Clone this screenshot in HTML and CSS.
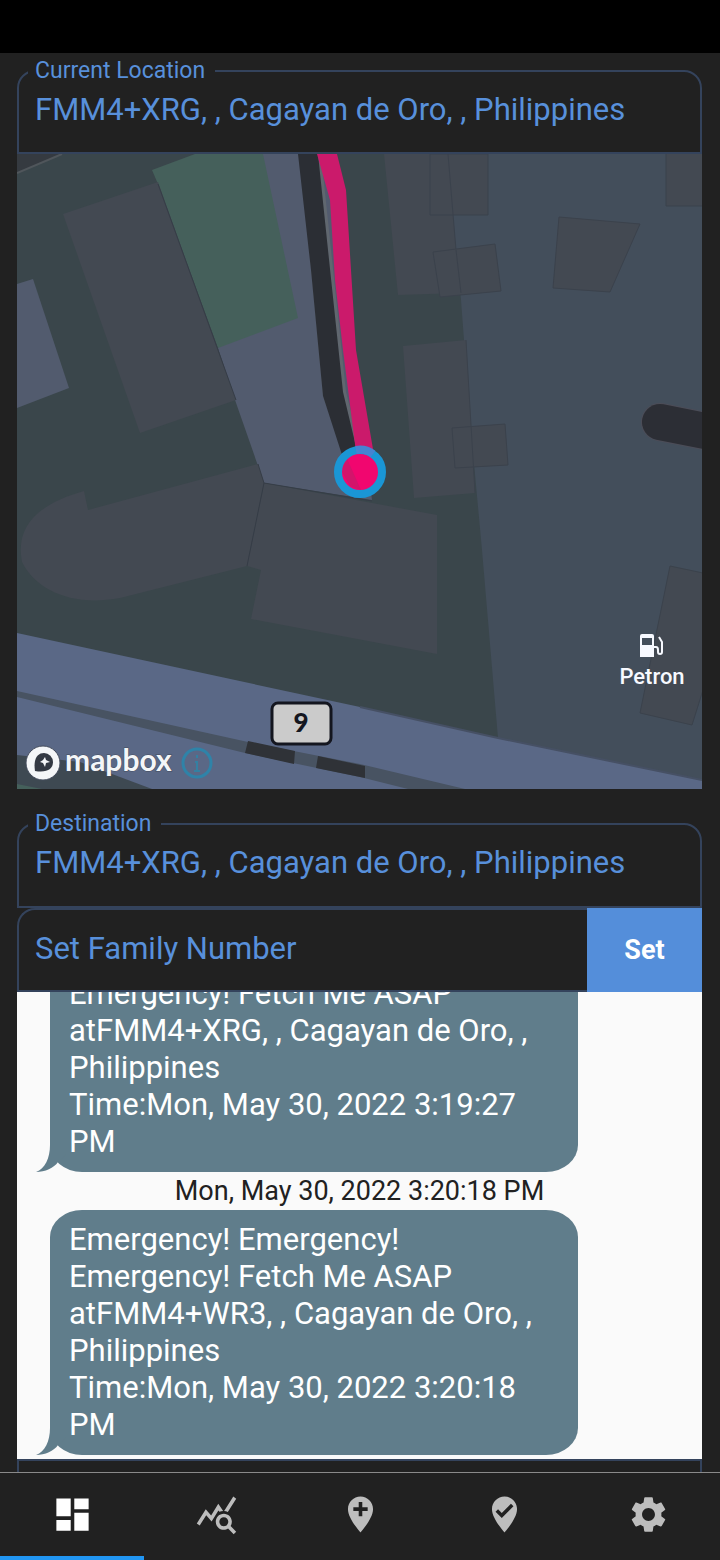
FILE: index.html
```html
<!DOCTYPE html>
<html lang="en">
<head>
<meta charset="utf-8">
<meta name="viewport" content="width=device-width, initial-scale=1">
<title>Dashboard</title>
<link rel="stylesheet" href="styles.css">
</head>
<body>
<div class="status-bar"></div>
<main class="content">
  <fieldset class="field">
    <legend class="field-legend"><label for="current">Current Location</label></legend>
    <input class="field-input" id="current" type="text" value="FMM4+XRG, , Cagayan de Oro, , Philippines">
  </fieldset>

  <svg class="map" viewBox="17 154 685 635" role="img" aria-label="Map">
    <rect x="17" y="154" width="685" height="635" fill="#3a464b"/>
    <path d="M17 154H62L17 173Z" fill="#353a40"/>
    <path d="M62 154L17 173" stroke="#50565b" stroke-width="2"/>
    <path d="M446 154H702V789H510L498 738L482 550L470 420L461 300Z" fill="#434e5b"/>
    <path d="M17 284L33 279L69 388L17 408Z" fill="#525b6e"/>
    <path d="M262 154H332L345 300L372 500L264 483L235 400L218 348L250 300Z" fill="#525b6e"/>
    <path d="M152 170L195 154H263L298 318L218 348L158 184Z" fill="#45605b"/>
    <g fill="#434952">
      <path d="M63 214L158 182L236 400L140 433Z"/>
      <path d="M84 491L88 510L258 464L264 483L247 566L120 598C72 607 36 590 22 562C15 526 38 504 84 491Z"/>
      <path d="M264 483L437 515V654L251 619L261 570L247 566Z"/>
    </g>
    <g fill="#434952" stroke="#3b424c" stroke-width="1">
      <path d="M384 154H448L456 250L461 293L398 295Z" stroke="none"/>
      <path d="M430 154H488V215H430Z"/>
      <path d="M448 154L456 250" fill="none"/>
      <path d="M433 252L495 244L501 291L440 297Z"/>
      <path d="M403 346L466 340L475 493L414 498Z" stroke="none"/>
      <path d="M452 428L505 424L508 465L455 468Z"/>
      <path d="M559 217L640 224L610 292L553 288Z"/>
      <path d="M666 153H703V206H666Z"/>
      <path d="M670 566L703 573V690L692 725L640 713Z"/>
      <path d="M466 340L475 493M456 250L461 293" fill="none"/>
    </g>
    <path d="M158 184L236 400M258 464L264 483L372 501M264 483L247 566" fill="none" stroke="#363d47" stroke-width="1"/>
    <path d="M300 154H321L331 250L346 392L362 455L345 460L323 396L315 310Z" fill="#60676f"/>
    <path d="M298 154H318L328 250L343 392L358 455L343 458L323 396L311 270Z" fill="#2b2e34"/>
    <path d="M317 154H337L346 190L356 350L374 455L357 460L343 350L335 280L330 200Z" fill="#cb1a6b"/>
    <path d="M720 434L660 422" stroke="#4c4d58" stroke-width="38" stroke-linecap="round"/>
    <path d="M720 434L660 422" stroke="#2c2e35" stroke-width="36" stroke-linecap="round"/>
    <path d="M17 633L360 707L498 738L702 780V789H17Z" fill="#5a6886"/>
    <path d="M360 707L498 738L702 780" fill="none" stroke="#465064" stroke-width="2"/>
    <path d="M17 691L248 742L360 764L465 789H408L360 777L245 753L17 697Z" fill="#485362"/>
    <path d="M248 741L295 751L294 764L245 753ZM318 756L365 766V778L316 768Z" fill="#2f3237"/>
    <path d="M17 755L80 762L152 789H17Z" fill="#3e4952"/>
    <path d="M17 784L42 789H17Z" fill="#45605b"/>

    <circle cx="360" cy="472" r="20" fill="#f1066f"/>
    <path d="M345 454L361 490L350 486L342 472Z" fill="#d3146b"/>
    <circle cx="360" cy="472" r="22" fill="none" stroke="#1a96d5" stroke-width="8"/>
    <path d="M356 450A22 22 0 0 1 373 454" fill="none" stroke="#4683d2" stroke-width="8"/>

    <rect x="272" y="703" width="59" height="41" rx="6" fill="#cbcbcb" stroke="#14161f" stroke-width="3"/>
    <text class="map-shield" x="301" y="732">9</text>

    <g fill="#f7f9ff">
      <path fill-rule="evenodd" d="M642 634H652Q654 634 654 636V657H640V636Q640 634 642 634ZM642 638V645H652V638Z"/>
      <path d="M654 647H656Q658 647 658 650V652Q658 654 660 654T662 652V642L659 637" fill="none" stroke="#f7f9ff" stroke-width="2"/>
    </g>
    <text class="map-poi" x="652" y="684">Petron</text>

    <circle cx="43" cy="763" r="17" fill="#f4f6f8" stroke="#444c5d" stroke-width="1"/>
    <path d="M35 771C33 758 38 753 44 753A9 9 0 0 1 53 762C53 769 47 773 35 771Z" fill="#333943"/>
    <path d="M45 757L46 760L50 762L46 763L45 767L43 763L40 762L43 760Z" fill="#f4f6f8"/>
    <text class="map-brand" x="65" y="771">mapbox</text>
    <circle cx="197" cy="763" r="14" fill="none" stroke="#2f83a8" stroke-width="3"/>
    <path d="M197 755V758M195 762H197V771M194 771H200" fill="none" stroke="#3480a2" stroke-width="2"/>
  </svg>

  <fieldset class="field field-destination">
    <legend class="field-legend"><label for="destination">Destination</label></legend>
    <input class="field-input" id="destination" type="text" value="FMM4+XRG, , Cagayan de Oro, , Philippines">
  </fieldset>

  <form class="family">
    <input class="family-input" type="tel" placeholder="Set Family Number" aria-label="Set Family Number">
    <button class="family-button" type="button">Set</button>
  </form>

  <section class="chat">
    <div class="bubble">Emergency! Emergency! Emergency! Fetch Me ASAP atFMM4+XRG, , Cagayan de Oro, , Philippines<br>Time:Mon, May 30, 2022 3:19:27 PM
      <svg class="bubble-tail" viewBox="0 0 32 27" aria-hidden="true"><path d="M14 0C14 13 9 24 0 27C9 27 18 23 22 17L32 8V0Z"/></svg>
    </div>
    <time class="chat-time">Mon, May 30, 2022 3:20:18 PM</time>
    <div class="bubble">Emergency! Emergency! Emergency! Fetch Me ASAP atFMM4+WR3, , Cagayan de Oro, , Philippines<br>Time:Mon, May 30, 2022 3:20:18 PM
      <svg class="bubble-tail" viewBox="0 0 32 27" aria-hidden="true"><path d="M14 0C14 13 9 24 0 27C9 27 18 23 22 17L32 8V0Z"/></svg>
    </div>
  </section>
  <div class="next-panel"></div>
</main>

<nav class="tabs">
  <a class="tab tab-active" href="#dashboard" aria-label="Dashboard"><svg class="tab-icon" viewBox="0 0 24 24"><path d="M3 13h8V3H3v10zm0 8h8v-6H3v6zm10 0h8V11h-8v10zm0-18v6h8V3h-8z"/></svg></a>
  <a class="tab" href="#stats" aria-label="Statistics"><svg class="tab-icon" viewBox="0 0 24 24"><path d="M19.88 18.47c.44-.7.7-1.51.7-2.39 0-2.49-2.01-4.5-4.5-4.5s-4.5 2.01-4.5 4.5 2.01 4.5 4.49 4.5c.88 0 1.7-.26 2.39-.7L21.58 23 23 21.58l-3.12-3.11zm-3.8.11c-1.38 0-2.5-1.12-2.5-2.5s1.12-2.5 2.5-2.5 2.5 1.12 2.5 2.5-1.12 2.5-2.5 2.5zm-.36-8.5c-.74.02-1.45.18-2.1.45l-.55-.83-3.8 6.18-3.01-3.52-3.63 5.81L1 17l5-8 3 3.5L13 6l2.72 4.08zm2.59.5c-.64-.28-1.33-.45-2.05-.49L21.38 2 23 3.18l-4.69 7.4z"/></svg></a>
  <a class="tab" href="#add" aria-label="Add location"><svg class="tab-icon" viewBox="0 0 24 24"><path d="M12 2C8.14 2 5 5.14 5 9c0 5.25 7 13 7 13s7-7.75 7-13c0-3.86-3.14-7-7-7zm4 8h-3v3h-2v-3H8V8h3V5h2v3h3v2z"/></svg></a>
  <a class="tab" href="#visited" aria-label="Visited"><svg class="tab-icon" viewBox="0 0 24 24"><path d="M12 2c3.86 0 7 3.14 7 7 0 5.25-7 13-7 13S5 14.25 5 9c0-3.86 3.14-7 7-7zm-1.53 12L17 7.41 15.6 6l-5.13 5.18L8.4 9.09 7 10.5l3.47 3.5z"/></svg></a>
  <a class="tab" href="#settings" aria-label="Settings"><svg class="tab-icon" viewBox="0 0 24 24"><path d="M19.14 12.94c.04-.3.06-.61.06-.94 0-.32-.02-.64-.07-.94l2.03-1.58c.18-.14.23-.41.12-.61l-1.92-3.32c-.12-.22-.37-.29-.59-.22l-2.39.96c-.5-.38-1.03-.7-1.62-.94l-.36-2.54c-.04-.24-.24-.41-.48-.41h-3.84c-.24 0-.43.17-.47.41l-.36 2.54c-.59.24-1.13.57-1.62.94l-2.39-.96c-.22-.08-.47 0-.59.22L2.74 8.87c-.12.21-.08.47.12.61l2.03 1.58c-.05.3-.09.63-.09.94s.02.64.07.94l-2.03 1.58c-.18.14-.23.41-.12.61l1.92 3.32c.12.22.37.29.59.22l2.39-.96c.5.38 1.03.7 1.62.94l.36 2.54c.05.24.24.41.48.41h3.84c.24 0 .44-.17.47-.41l.36-2.54c.59-.24 1.13-.56 1.62-.94l2.39.96c.22.08.47 0 .59-.22l1.92-3.32c.12-.22.07-.47-.12-.61l-2.01-1.58zM12 15.6c-1.98 0-3.6-1.62-3.6-3.6s1.62-3.6 3.6-3.6 3.6 1.62 3.6 3.6-1.62 3.6-3.6 3.6z"/></svg></a>
</nav>
</body>
</html>
```

FILE: styles.css
```css
* {
  box-sizing: border-box;
}

body {
  margin: 0;
  height: 100vh;
  display: flex;
  flex-direction: column;
  background: #212121;
  color: #5890db;
  font-family: Roboto, "Liberation Sans", sans-serif;
}

.status-bar {
  flex: none;
  height: 53px;
  background: #000;
}

.content {
  flex: 1;
  min-height: 0;
  display: flex;
  flex-direction: column;
  padding: 0 18px 0 17px;
}

.field {
  flex: none;
  min-width: 0;
  margin: 0;
  padding: 0 16px 23px 9px;
  border: 2px solid #34435c;
  border-radius: 18px 18px 0 0;
}

.field-destination {
  margin-top: 17px;
  padding-bottom: 24px;
}

.field-legend {
  padding: 0 10px 0 7px;
  font-size: 23px;
  line-height: 36px;
}

.field-input {
  display: block;
  width: 100%;
  height: 40px;
  padding: 0 0 0 7px;
  border: 0;
  outline: 0;
  background: transparent;
  color: inherit;
  font: inherit;
  font-size: 31px;
}

.map {
  display: block;
  flex: none;
  width: 100%;
}

.map-shield {
  fill: #14161f;
  font: 900 26px Lato, sans-serif;
  text-anchor: middle;
}

.map-poi {
  fill: #f7f9ff;
  font: 500 22px Roboto, sans-serif;
  text-anchor: middle;
}

.map-brand {
  fill: #f4f6f8;
  stroke: #444c5d;
  stroke-width: 1px;
  paint-order: stroke;
  font: 700 30px Lato, sans-serif;
}

.family {
  flex: none;
  display: flex;
  height: 84px;
}

.family-input {
  flex: 1;
  min-width: 0;
  padding: 0 16px 3px;
  border: 2px solid #34435c;
  border-right: 0;
  border-radius: 18px 0 0 0;
  outline: 0;
  background: transparent;
  color: inherit;
  font: inherit;
  font-size: 31px;
}

.family-input::placeholder {
  color: #5890db;
  opacity: 1;
}

.family-button {
  width: 115px;
  border: 0;
  background: #548eda;
  color: #fff;
  font: inherit;
  font-size: 27px;
  font-weight: 700;
}

.chat {
  flex: 1;
  min-height: 0;
  overflow: hidden;
  display: flex;
  flex-direction: column;
  justify-content: flex-end;
  padding: 0 124px 4px 33px;
  background: #fafafa;
}

.bubble {
  flex: none;
  position: relative;
  padding: 11px 28px 12px 19px;
  border-radius: 32px / 27px;
  background: #607d8b;
  color: #fff;
  font-size: 31px;
  line-height: 37px;
}

.bubble-tail {
  position: absolute;
  left: -14px;
  bottom: 0;
  width: 32px;
  height: 27px;
  fill: #607d8b;
}

.chat-time {
  flex: none;
  margin: 0 -91px 0 0;
  color: #212121;
  font-size: 27px;
  line-height: 38px;
  text-align: center;
}

.next-panel {
  flex: none;
  height: 13px;
  border: 2px solid #34435c;
  border-bottom: 0;
}

.tabs {
  flex: none;
  display: flex;
  height: 88px;
  border-top: 1px solid #8a8a8a;
}

.tab {
  flex: 1;
  display: flex;
  align-items: center;
  justify-content: center;
  border-bottom: 4px solid transparent;
  color: #bdbdbd;
}

.tab-active {
  border-bottom-color: #2196f3;
  color: #fff;
}

.tab-icon {
  width: 43px;
  height: 43px;
  fill: currentColor;
}
```
